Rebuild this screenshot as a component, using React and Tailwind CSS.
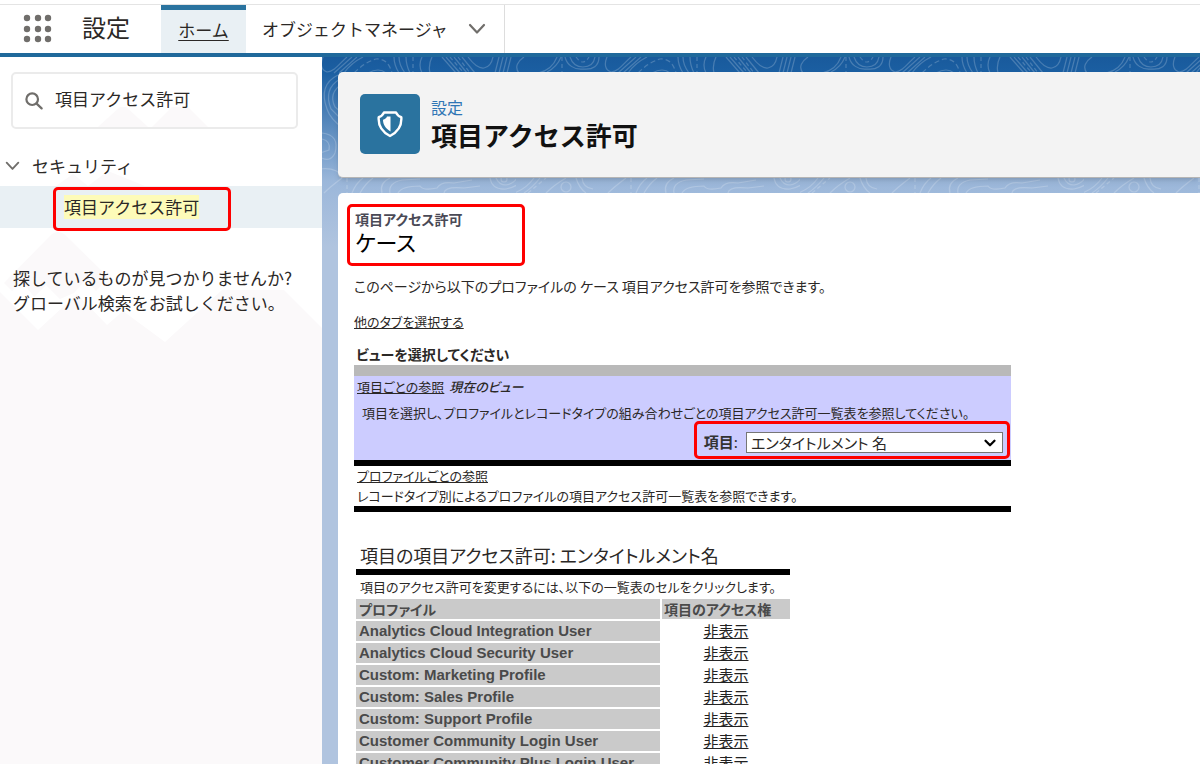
import { useState } from "react";
import { ChevronDown } from "lucide-react";

const profiles = [
  "Analytics Cloud Integration User",
  "Analytics Cloud Security User",
  "Custom: Marketing Profile",
  "Custom: Sales Profile",
  "Custom: Support Profile",
  "Customer Community Login User",
  "Customer Community Plus Login User",
];

const fields = ["エンタイトルメント 名", "ケース 番号", "ケース 所有者"];

const AppLauncherIcon = () => (
  <svg width="30" height="30" viewBox="0 0 30 30" fill="#706e6b">
    {[4, 15, 25].map((y) =>
      [4, 15, 25].map((x) => <circle key={`${x}-${y}`} cx={x} cy={y} r="3.2" />),
    )}
  </svg>
);

const SearchIcon = () => (
  <svg
    width="18"
    height="18"
    viewBox="0 0 18 18"
    fill="none"
    stroke="#706e6b"
    strokeWidth="2.2"
    strokeLinecap="round"
    className="shrink-0"
  >
    <circle cx="7.2" cy="7.2" r="5.8" />
    <path d="M11.6 11.6 L16.6 16.4" />
  </svg>
);

const ChevronIcon = ({ className }) => (
  <svg
    viewBox="0 0 18 12"
    fill="none"
    stroke="#706e6b"
    strokeWidth="2.2"
    strokeLinecap="round"
    strokeLinejoin="round"
    className={className}
  >
    <path d="M2 2 L9 9.5 L16 2" />
  </svg>
);

const ShieldIcon = () => (
  <svg width="26" height="28" viewBox="0 0 26 28" fill="none">
    <path
      d="M7 2.5 H19 Q20.5 6 24.3 7.2 C25 16 21 22 13 26 C5 22 1 16 1.7 7.2 Q5.5 6 7 2.5 Z"
      stroke="#fff"
      strokeWidth="2.4"
      strokeLinejoin="round"
    />
    <path d="M13.5 6.5 V21.5 C8.5 18.5 6 14.5 6 9.8 C8 9.3 9.3 8.2 10 6.5 Z" fill="#fff" />
  </svg>
);

// Contour-line backdrop, repeats every 284px
const Topography = () => (
  <svg className="absolute inset-0 h-full w-full" aria-hidden="true">
    <defs>
      <pattern id="topo" x="194" y="0" width="284" height="260" patternUnits="userSpaceOnUse">
        <g fill="none" stroke="#fff" strokeOpacity="0.2" strokeWidth="1.2">
          <path d="M8 0 C2 4 -2 10 3 16 M22 16 C32 14 38 8 41 0 M31 15 Q41 10 45 0" />
          <path d="M49 0 C51 8 58 13 67 12 C77 13 83 9 83 0 M54 0 C56 6 60 10 67 10 C75 10 78 6 79 0" />
          <path d="M60 0 Q67 10 73 0 M46 0 V16" strokeDasharray="4 3" />
          <path d="M91 0 C88 7 89 13 95 15 C103 14 107 7 115 0 M102 16 L120 0 M107 16 L125 0 M112 16 Q119 6 131 0" />
          <path d="M122 16 Q133 5 144 2 Q156 1 160 16" strokeDasharray="5 3" />
          <path d="M136 16 Q147 10 154 16 M162 0 Q162 8 167 16 M167 0 Q167 8 173 16 M174 0 Q174 8 178 16 M190 0 Q186 8 190 16 M200 0 Q196 8 198 16" />
          <path d="M181 0 V16 M218 0 L232 16 M226 0 L238 16" strokeDasharray="4 3" />
          <path d="M210 0 L224 16 M214 0 L228 16 M222 0 L235 16 M230 0 L243 16 M236 0 Q245 12 252 11 Q259 10 261 0" />
          <path d="M263 16 L267 0 M267 16 L271 0 M271 16 L275 0 M275 16 L279 0" />
          <path d="M-2 136 Q10 132 18 121 M8 136 Q16 131 24 121 M30 136 Q38 128 50 121 M60 121 Q63 131 70 136 M66 121 Q67 131 77 132 M92 136 Q98 130 110 121" />
          <circle cx="50" cy="130" r="5" />
          <path d="M12 136 L30 121 M115 121 V136" strokeDasharray="4 3" />
          <path d="M120 136 Q124 126 131 121 M128 136 Q133 127 141 121 M150 136 Q147 126 158 121 M158 136 Q156 126 170 123 L188 122 M166 136 Q170 129 188 129 Q191 134 205 131 Q209 124 222 126 L240 123 M212 136 Q213 129 232 131 L248 129" />
          <path d="M258 121 Q260 133 274 132 Q286 130 292 121 M264 121 Q267 128 274 128 Q281 127 285 121" />
          <circle cx="272" cy="122" r="3" />
          <path d="M106 18 Q86 28 95 52 Q98 62 112 72 M108 22 Q91 32 99 52 L112 65 M110 27 Q96 36 103 50 L112 58" />
          <path d="M90 76 Q108 78 103 96 Q98 107 86 99 M90 82 Q99 84 97 93 L88 96 M110 72 Q108 90 114 112 M88 112 Q104 110 112 120" />
        </g>
      </pattern>
    </defs>
    <rect width="100%" height="260" fill="url(#topo)" />
  </svg>
);

const Mountains = () => (
  <svg
    className="absolute inset-x-0 top-0 h-[290px] w-full"
    viewBox="0 0 322 290"
    preserveAspectRatio="none"
    aria-hidden="true"
  >
    <path
      d="M0 0 H322 V271 L284 233 H222 L165 285 L123 254 L107 268 L77 237 L38 273 L0 235 Z"
      fill="#fff"
    />
    <path
      d="M4 226 L52 177 Q58 173 64 177 L108 220 L96 234 L86 222 L74 236 L60 242 L46 228 L34 240 L22 224 L12 234 Z"
      fill="#fbf9fa"
    />
    <path d="M98 70 L120 50 L126 50 L148 70 Z M152 70 L172 50 L188 50 L208 70 Z" fill="#fbf9fa" />
    <path d="M56 129 L73 117 L88 129 L108 114 L145 129 Z" fill="#fbf9fa" />
  </svg>
);

const RedBox = ({ className }) => (
  <span
    className={`pointer-events-none absolute rounded-[5px] border-3 border-[#fe0000] ${className}`}
  />
);

function TopBar() {
  return (
    <header className="mt-1 flex h-[53px] shrink-0 items-stretch border-t border-b-4 border-t-[#e4e4e4] border-b-[#20699b] bg-white">
      <button
        className="ml-[23px] mr-[29px] self-center"
        aria-label="アプリケーションランチャー"
      >
        <AppLauncherIcon />
      </button>
      <h1 className="w-[79px] self-center pb-1 text-[24px] leading-[30px]">設定</h1>
      <nav className="flex items-stretch text-[17px]">
        <a
          href="#home"
          className="flex w-[85px] items-center justify-center border-t-5 border-[#2a739f] bg-[#e9f0f4] pb-1 underline underline-offset-3"
        >
          ホーム
        </a>
        <a
          href="#objects"
          className="flex items-center gap-5 border-r border-[#dddddd] pl-4 pr-[18px]"
        >
          オブジェクトマネージャ
          <ChevronIcon className="h-3 w-[18px]" />
        </a>
      </nav>
    </header>
  );
}

function Sidebar() {
  const [query, setQuery] = useState("項目アクセス許可");

  return (
    <aside className="relative w-[322px] shrink-0 bg-[#fbf9fa] text-[17px]">
      <Mountains />
      <div className="relative">
        <label className="ml-[11px] mr-6 mt-[15px] flex h-[57px] items-center gap-3 rounded-[5px] border-2 border-[#ebebeb] pl-3">
          <SearchIcon />
          <input
            type="text"
            aria-label="クイック検索"
            value={query}
            onChange={(e) => setQuery(e.target.value)}
            className="w-full bg-transparent pb-1 outline-none"
          />
        </label>
        <button className="mt-[23px] flex h-7 items-center gap-3 pl-[5px]">
          <ChevronIcon className="h-2.5 w-[15px]" />
          セキュリティ
        </button>
        <div className="relative mt-1.5 flex h-[42px] items-center bg-[#e9f0f4] pl-16">
          <a href="#field-accessibility" className="bg-[#fdfbb9] leading-6">
            項目アクセス許可
          </a>
          <RedBox className="left-[53px] top-px h-[44px] w-[178px]" />
        </div>
        <p className="mt-[37px] pl-[13px] leading-[25px]">
          探しているものが見つかりませんか?
          <br />
          グローバル検索をお試しください。
        </p>
      </div>
    </aside>
  );
}

function ViewPicker() {
  const [field, setField] = useState(fields[0]);

  return (
    <section className="mt-2.5 w-[657px] text-[13px]">
      <h3 className="pl-0.5 text-[14px] font-bold leading-[22px]">ビューを選択してください</h3>
      <div className="border-b-6 border-t-11 border-b-black border-t-[#b9b9b9] bg-[#ccccff]">
        <p className="pl-[3px] leading-[22px]">
          <a href="#by-field" className="underline">
            項目ごとの参照
          </a>{" "}
          <em className="pl-0.5 font-medium">現在のビュー</em>
        </p>
        <p className="whitespace-nowrap pl-2 pt-1 leading-[22px]">
          項目を選択し、プロファイルとレコードタイプの組み合わせごとの項目アクセス許可一覧表を参照してください。
        </p>
        <div className="relative flex h-9 items-center justify-end pb-px pr-2 pt-0.5">
          <label htmlFor="field" className="mr-2 text-[15px] text-[#333333]">
            <b>項目</b>:
          </label>
          <div className="relative">
            <select
              id="field"
              value={field}
              onChange={(e) => setField(e.target.value)}
              className="block h-[21px] w-[257px] appearance-none border border-[#767676] bg-white pl-1 text-[15px] leading-[18px]"
            >
              {fields.map((f) => (
                <option key={f}>{f}</option>
              ))}
            </select>
            <ChevronDown
              size={18}
              strokeWidth={3}
              className="pointer-events-none absolute right-1 top-0.5 text-black"
            />
          </div>
          <RedBox className="-top-[3px] right-px h-[38px] w-[316px]" />
        </div>
      </div>
      <div className="border-b-6 border-black pl-[3px] leading-5">
        <a href="#by-profile" className="underline">
          プロファイルごとの参照
        </a>
        <p>レコードタイプ別によるプロファイルの項目アクセス許可一覧表を参照できます。</p>
      </div>
    </section>
  );
}

function AccessTable() {
  return (
    <section className="ml-0.5 mt-[30px] w-[434px]">
      <h3 className="border-b-6 border-black pl-1 text-[18px] leading-[27px]">
        項目の項目アクセス許可: エンタイトルメント名
      </h3>
      <p className="whitespace-nowrap pl-1 text-[13px] leading-6">
        項目のアクセス許可を変更するには、以下の一覧表のセルをクリックします。
      </p>
      <table className="w-full border-separate border-spacing-0 text-[#4a4a4a]">
        <thead>
          <tr className="text-left leading-5">
            <th className="border-b-2 border-r-2 border-white bg-[#cacaca] pl-[3px] font-bold">
              プロファイル
            </th>
            <th className="w-[128px] border-b-2 border-white bg-[#cacaca] pl-0.5 font-bold">
              項目のアクセス権
            </th>
          </tr>
        </thead>
        <tbody>
          {profiles.map((name) => (
            <tr key={name}>
              <th className="border-b-2 border-r-2 border-white bg-[#cacaca] pl-[3px] text-left font-['Liberation_Sans','Noto_Sans_CJK_JP',sans-serif] text-[15px] font-bold leading-5">
                {name}
              </th>
              <td className="border-b-2 border-white text-center text-[15px] leading-5 text-[#222222]">
                <a href="#edit" className="underline">
                  非表示
                </a>
              </td>
            </tr>
          ))}
        </tbody>
      </table>
    </section>
  );
}

export default function App() {
  return (
    <div className="flex h-screen flex-col overflow-hidden bg-white font-['Noto_Sans_CJK_JP',sans-serif] text-[#2b2826]">
      <TopBar />
      <div className="flex min-h-0 flex-1">
        <Sidebar />
        <main className="relative flex min-w-0 flex-1 flex-col bg-[#b0c4df] bg-[linear-gradient(#195a9c_0px,#1b5fa2_16px,#9bb7da_124px,#b0c4df_190px)]">
          <Topography />
          <div className="relative ml-4 mt-[15px] flex h-[106px] shrink-0 items-center gap-[11px] rounded-l-[5px] border-b border-[#b5b5b5] bg-[#f3f3f3] pb-px pl-[22px] shadow-md">
            <div className="flex size-[60px] items-center justify-center rounded-[5px] bg-[#2a739f]">
              <ShieldIcon />
            </div>
            <div className="pb-[3px]">
              <p className="text-[16px] leading-6 text-[#2f76b5]">設定</p>
              <h2 className="text-[26px] font-bold leading-8 text-[#111111]">項目アクセス許可</h2>
            </div>
          </div>
          <div className="relative ml-4 mt-[15px] min-h-0 flex-1 overflow-hidden rounded-tl-[5px] bg-white pl-4 pt-4 text-[14px] [font-feature-settings:'palt']">
            <div className="relative pl-px">
              <h2>
                <span className="block text-[14px] font-bold leading-5 text-[#4a4a56]">
                  項目アクセス許可
                </span>
                <span className="block text-[22px] leading-6 text-black">ケース</span>
              </h2>
              <RedBox className="-left-[7px] -top-[5px] h-[62px] w-[178px]" />
            </div>
            <p className="mt-[22px] leading-[22px]">
              このページから以下のプロファイルの ケース 項目アクセス許可を参照できます。
            </p>
            <a href="#tabs" className="mt-[14px] block w-fit text-[13px] leading-[22px] underline">
              他のタブを選択する
            </a>
            <ViewPicker />
            <AccessTable />
          </div>
        </main>
      </div>
    </div>
  );
}
